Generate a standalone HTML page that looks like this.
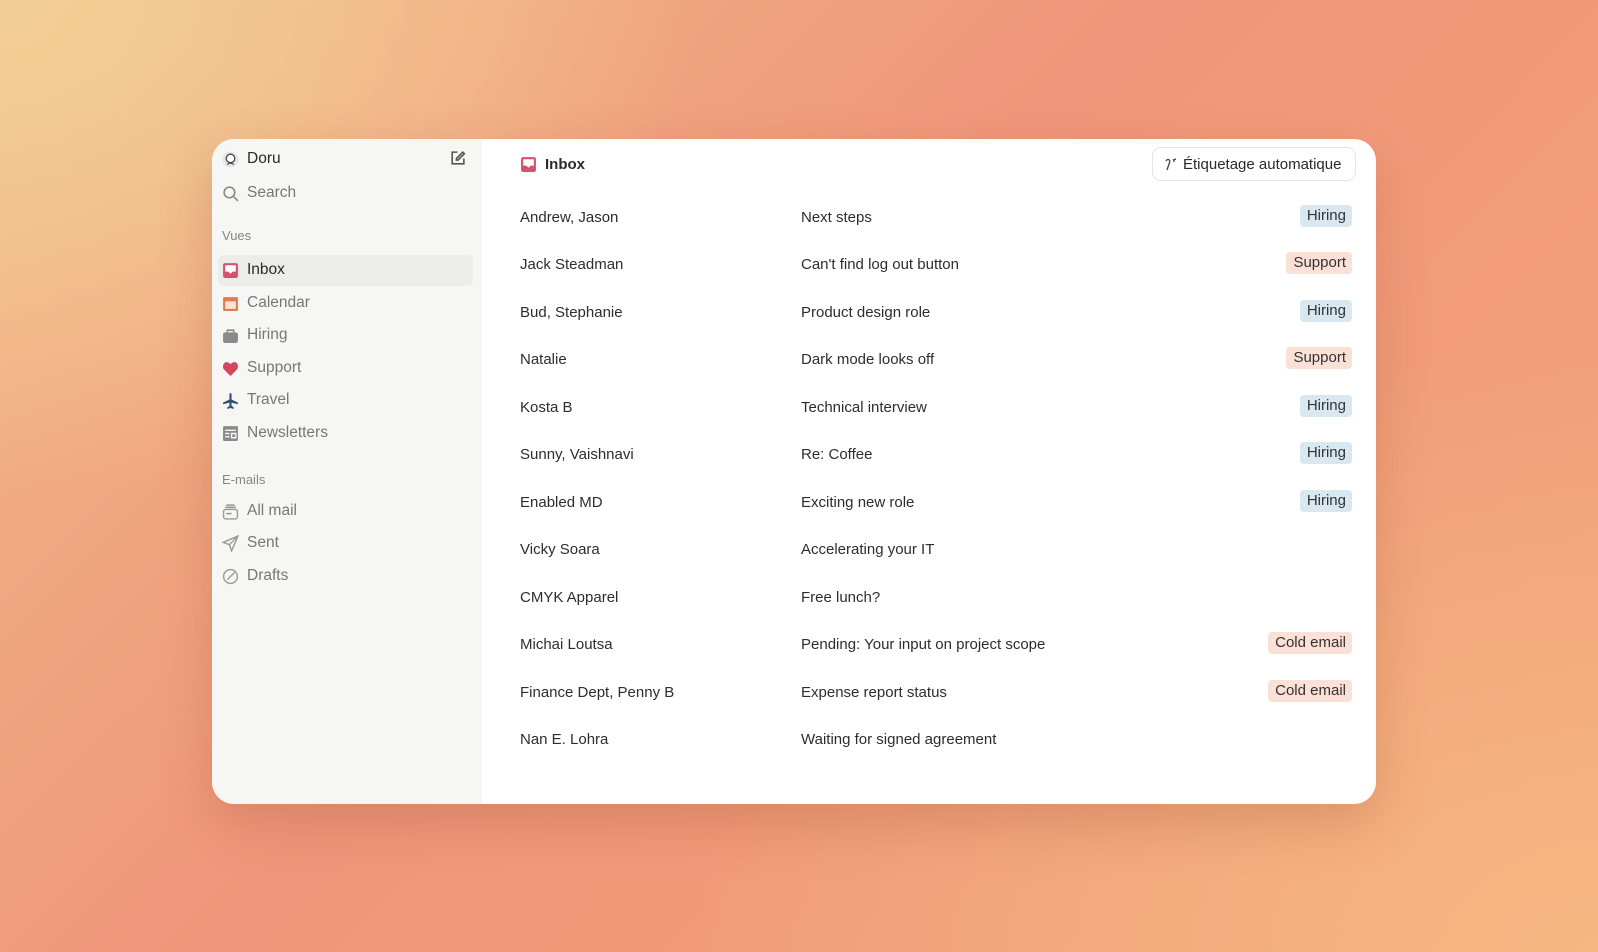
<!DOCTYPE html>
<html><head><meta charset="utf-8"><style>
*{margin:0;padding:0;box-sizing:border-box}
body{width:1598px;height:952px;overflow:hidden;font-family:"Liberation Sans",sans-serif;
background:
radial-gradient(ellipse 700px 500px at 0% 0%, #f3cf96 0%, rgba(243,207,150,0) 100%),
radial-gradient(ellipse 900px 600px at 100% 100%, #f6b782 0%, rgba(246,183,130,0) 100%),
linear-gradient(135deg,#f1b98a 0%,#f0967a 45%,#f3a47c 100%);position:relative}
.card{position:absolute;left:212px;top:139px;width:1164px;height:665px;background:#fff;border-radius:22px;overflow:hidden;box-shadow:0 20px 50px rgba(150,70,40,.25)}
.side{position:absolute;left:0;top:0;width:270px;height:100%;background:#f6f6f5}
.it{position:absolute;left:10px;height:20px;display:flex;align-items:center;font-size:15.5px;color:#777}
.it svg{width:17px;height:17px;margin-right:8px}
.lbl{position:absolute;left:10px;font-size:13px;color:#858585}
.row{position:absolute;left:308px;right:24px;height:24px;font-size:15px;color:#2d2d2d;display:flex;align-items:center}
.row .s{width:281px}
.tag{position:absolute;right:0;top:0;height:22px;padding:0 6px 0 7px;border-radius:4px;font-size:15px;line-height:22px;color:#333}
.h{background:#d9e7f1}.p{background:#fbe0d6}
</style></head><body>
<div class="card">
<div class="side">
 <div class="it" style="top:10px;color:#2a2a2a"><svg viewBox="0 0 16 16"><circle cx="8" cy="8" r="7.5" fill="#e5e5e5"/><circle cx="8" cy="7" r="4" fill="#fff" stroke="#444" stroke-width="1.2"/><path d="M5 13c1-2 5-2 6 0" stroke="#444" fill="none"/></svg>Doru</div>
 <svg style="position:absolute;left:237px;top:11px" width="17" height="17" viewBox="0 0 16 16" fill="none" stroke="#555" stroke-width="1.5"><path d="M8 2H3v11h11V8"/><path d="M13 2L7 8v1.5h1.5L14.5 3.5z"/></svg>
 <div class="it" style="top:44px"><svg viewBox="0 0 16 16" fill="none" stroke="#888" stroke-width="1.5"><circle cx="7" cy="7" r="5"/><path d="M11 11l4 4"/></svg>Search</div>
 <div class="lbl" style="top:89px">Vues</div>
 <div style="position:absolute;left:6px;top:116px;width:255px;height:31px;background:#ececeb;border-radius:6px"></div>
 <div class="it" style="top:121px;color:#2a2a2a"><svg viewBox="0 0 16 16"><rect x="1" y="1" width="14" height="14" rx="2" fill="#d9506a"/><path d="M3 3h10v6h-3l-2 2-2-2H3z" fill="#fff"/></svg>Inbox</div>
 <div class="it" style="top:154px"><svg viewBox="0 0 16 16"><rect x="1" y="2" width="14" height="13" rx="1" fill="#e07d4e"/><rect x="3" y="6" width="10" height="7" fill="#fbe3d4"/></svg>Calendar</div>
 <div class="it" style="top:186px"><svg viewBox="0 0 16 16"><rect x="1" y="5" width="14" height="10" rx="2" fill="#8a8a8a"/><path d="M5 5V3h6v2" stroke="#8a8a8a" stroke-width="1.5" fill="none"/></svg>Hiring</div>
 <div class="it" style="top:219px"><svg viewBox="0 0 16 16"><path d="M8 15L2 9C0 7 1 2 4.5 2 6.5 2 8 4 8 4s1.5-2 3.5-2C15 2 16 7 14 9z" fill="#d6455f"/></svg>Support</div>
 <div class="it" style="top:251px"><svg viewBox="0 0 16 16"><path d="M8 1c1 0 1 1 1 2v4l6 3v1.5l-6-1.5v3l2 1.5V16l-3-1-3 1v-1.5L7 13v-3L1 11.5V10l6-3V3c0-1 0-2 1-2z" fill="#35506e"/></svg>Travel</div>
 <div class="it" style="top:284px"><svg viewBox="0 0 16 16"><rect x="1" y="1" width="14" height="14" rx="1" fill="#8a8a8a"/><path d="M3 5h10M3 8h4M3 11h4M9 8h4v4H9z" stroke="#f6f6f5" stroke-width="1.3" fill="none"/></svg>Newsletters</div>
 <div class="lbl" style="top:333px">E-mails</div>
 <div class="it" style="top:362px"><svg viewBox="0 0 16 16" fill="none" stroke="#999" stroke-width="1.3"><rect x="1.5" y="6" width="13" height="9" rx="2"/><path d="M3 4h10M4 2h8M4 10h5"/></svg>All mail</div>
 <div class="it" style="top:394px"><svg viewBox="0 0 16 16" fill="none" stroke="#999" stroke-width="1.3"><path d="M15 1L1 7l6 2 2 6z M15 1L7 9"/></svg>Sent</div>
 <div class="it" style="top:427px"><svg viewBox="0 0 16 16" fill="none" stroke="#999" stroke-width="1.3"><circle cx="8" cy="8" r="6.5"/><path d="M5 11l7-7"/></svg>Drafts</div>
</div>
<div style="position:absolute;left:308px;top:15px;display:flex;align-items:center;font-size:15px;font-weight:bold;color:#2a2a2a;height:20px"><svg width="17" height="17" viewBox="0 0 16 16" style="margin-right:8px"><rect x="1" y="1" width="14" height="14" rx="2" fill="#d9506a"/><path d="M3 3h10v6h-3l-2 2-2-2H3z" fill="#fff"/></svg>Inbox</div>
<div style="position:absolute;left:940px;top:8px;width:204px;height:34px;border:1px solid #e6e6e6;border-radius:9px;font-size:15px;color:#2a2a2a;display:flex;align-items:center;padding-left:11px"><svg width="14" height="14" viewBox="0 0 14 14" fill="none" stroke="#444" stroke-width="1.3" style="margin-right:5px"><path d="M2 4c1-2 3-2 4 0M9 3l3-1M10 2v3M6 4L3 13"/></svg>Étiquetage automatique</div>
<div class="row" style="top:66px"><span class="s">Andrew, Jason</span>Next steps<span class="tag h">Hiring</span></div>
<div class="row" style="top:113px"><span class="s">Jack Steadman</span>Can't find log out button<span class="tag p">Support</span></div>
<div class="row" style="top:161px"><span class="s">Bud, Stephanie</span>Product design role<span class="tag h">Hiring</span></div>
<div class="row" style="top:208px"><span class="s">Natalie</span>Dark mode looks off<span class="tag p">Support</span></div>
<div class="row" style="top:256px"><span class="s">Kosta B</span>Technical interview<span class="tag h">Hiring</span></div>
<div class="row" style="top:303px"><span class="s">Sunny, Vaishnavi</span>Re: Coffee<span class="tag h">Hiring</span></div>
<div class="row" style="top:351px"><span class="s">Enabled MD</span>Exciting new role<span class="tag h">Hiring</span></div>
<div class="row" style="top:398px"><span class="s">Vicky Soara</span>Accelerating your IT</div>
<div class="row" style="top:446px"><span class="s">CMYK Apparel</span>Free lunch?</div>
<div class="row" style="top:493px"><span class="s">Michai Loutsa</span>Pending: Your input on project scope<span class="tag p">Cold email</span></div>
<div class="row" style="top:541px"><span class="s">Finance Dept, Penny B</span>Expense report status<span class="tag p">Cold email</span></div>
<div class="row" style="top:588px"><span class="s">Nan E. Lohra</span>Waiting for signed agreement</div>
</div>
</body></html>
